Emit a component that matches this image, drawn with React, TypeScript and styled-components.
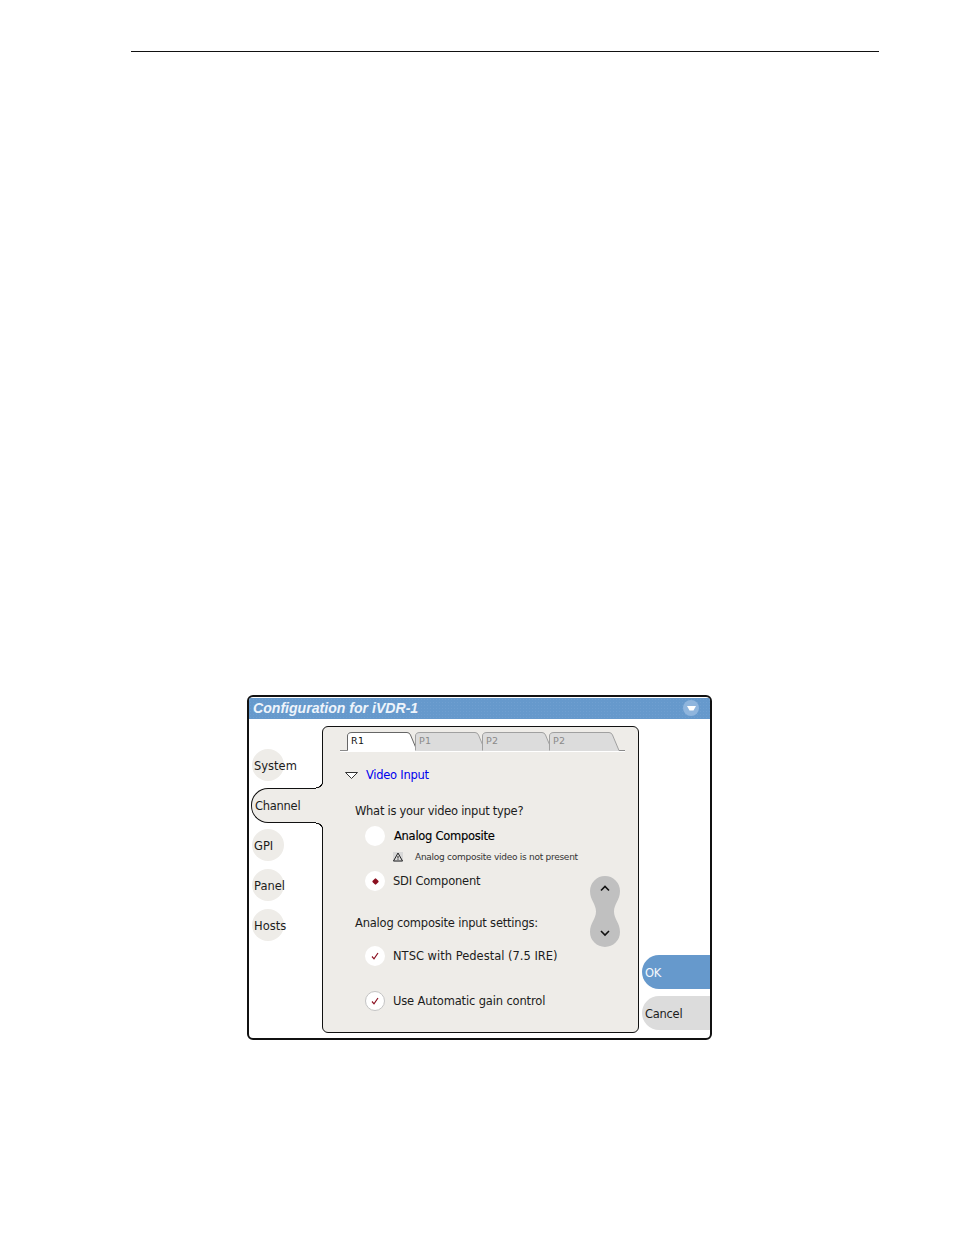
import styled, { createGlobalStyle } from 'styled-components'

const panelColor = '#eeece8'
const blue = '#6699cc'

const GlobalStyle = createGlobalStyle`
  html, body {
    margin: 0;
    padding: 0;
    background: #fff;
  }
  body {
    font-family: 'DejaVu Sans', 'Liberation Sans', sans-serif;
    font-size: 11.5px;
    letter-spacing: -0.27px;
    color: #1c1c1c;
  }
`

const Page = styled.div`
  width: 954px;
  height: 1235px;
  padding-top: 51px;
  box-sizing: border-box;
  overflow: hidden;
`

const TopRule = styled.div`
  width: 748px;
  height: 1px;
  margin-left: 131px;
  background: #111;
`

const Dialog = styled.div`
  width: 465px;
  height: 345px;
  margin: 643px 0 0 247px;
  box-sizing: border-box;
  border: 2px solid #111;
  border-radius: 6px;
  overflow: hidden;
  display: flex;
  flex-direction: column;
`

const TitleBar = styled.div`
  height: 21px;
  margin-top: 1px;
  flex: none;
  display: flex;
  align-items: center;
  justify-content: space-between;
  box-sizing: border-box;
  padding: 0 11px 1px 4px;
  background-color: ${blue};
  background-image: radial-gradient(circle, #6f9fd0 0.6px, transparent 0.8px);
  background-size: 3px 3px;
`

const Title = styled.span`
  font-family: 'Liberation Sans', Arial, sans-serif;
  font-size: 14.1px;
  font-weight: 700;
  font-style: italic;
  letter-spacing: 0;
  color: #eef4fb;
`

const MenuButton = styled.div`
  width: 16px;
  height: 16px;
  border-radius: 50%;
  background: #8fb5dd;
  display: flex;
  align-items: center;
  justify-content: center;
`

const Body = styled.div`
  flex: 1;
  display: flex;
  padding-top: 7px;
  padding-bottom: 5px;
  min-height: 0;
`

const Sidebar = styled.div`
  width: 73px;
  flex: none;
  padding-top: 19px;
  box-sizing: border-box;
  position: relative;
  z-index: 2;
`

const SideRow = styled.div`
  height: 40px;
  display: flex;
  align-items: center;
`

const SideItem = styled.div`
  position: relative;
  display: flex;
  align-items: center;
  height: 32px;
  margin-left: 3px;
  padding: 2px 0 0 2px;
  box-sizing: border-box;
  letter-spacing: 0;

  &::before {
    content: '';
    position: absolute;
    left: 0;
    top: 0;
    width: 32px;
    height: 32px;
    border-radius: 50%;
    background: ${panelColor};
  }

  span {
    position: relative;
  }
`

const SideTabActive = styled.div`
  position: relative;
  width: 72px;
  height: 35px;
  margin-left: 2px;
  margin-right: -1px;
  padding: 1px 0 0 3px;
  box-sizing: border-box;
  display: flex;
  align-items: center;
  background: ${panelColor};
  border: 1px solid #111;
  border-right: none;
  border-radius: 17px 0 0 17px;

  &::before,
  &::after {
    content: '';
    position: absolute;
    right: 0;
    width: 7px;
    height: 8px;
  }

  &::before {
    top: -8px;
    background: radial-gradient(circle at 0 0, #fff 6px, #111 6.3px, #111 7.2px, ${panelColor} 7.5px);
  }

  &::after {
    bottom: -8px;
    background: radial-gradient(circle at 0 100%, #fff 6px, #111 6.3px, #111 7.2px, ${panelColor} 7.5px);
  }
`

const Panel = styled.div`
  position: relative;
  width: 317px;
  flex: none;
  box-sizing: border-box;
  border: 1px solid #111;
  border-radius: 6px;
  background: ${panelColor};
  padding-top: 4px;
`

const TabStrip = styled.div`
  width: 285px;
  height: 20px;
  margin-left: 17px;
  padding-left: 7px;
  box-sizing: border-box;
  display: flex;
  border-bottom: 1px solid #8a8a8a;
  box-shadow: 0 1px 0 #fff;
`

const Tab = styled.div<{ $active?: boolean }>`
  position: relative;
  width: ${p => (p.$active ? 68 : 67)}px;
  height: 20px;
  flex: none;
  padding: 4px 0 0 4px;
  box-sizing: border-box;
  font-size: 9.5px;
  letter-spacing: 0.3px;
  color: ${p => (p.$active ? '#111' : '#8a8a8a')};

  svg {
    position: absolute;
    left: 0;
    top: 0;
  }

  span {
    position: relative;
  }
`

const Line = styled.div<{ $top: number; $left: number; $spacing?: number }>`
  height: 20px;
  margin-top: ${p => p.$top}px;
  margin-left: ${p => p.$left}px;
  display: flex;
  align-items: center;
  white-space: nowrap;
  letter-spacing: ${p => p.$spacing ?? -0.27}px;
`

const DiscloseLabel = styled.span`
  margin-left: 8px;
  color: #0000ee;
`

const StrongLabel = styled.span`
  margin-left: 1px;
  color: #000;
  -webkit-text-stroke: 0.15px #000;
`

const Bullet = styled.div<{ $ring?: boolean }>`
  width: 20px;
  height: 20px;
  flex: none;
  margin-right: 8px;
  border-radius: 50%;
  box-sizing: border-box;
  background: #fff;
  border: ${p => (p.$ring ? '1.5px solid #c4c4c4' : 'none')};
  display: flex;
  align-items: center;
  justify-content: center;
`

const Dot = styled.div`
  width: 5px;
  height: 5px;
  background: #8b1020;
  transform: rotate(45deg);
  border-radius: 1px;
`

const Warning = styled.div`
  width: 10px;
  height: 10px;
  flex: none;
  margin-right: 12px;
  background: #d8d8d8;
  display: flex;
`

const Note = styled.span`
  font-size: 9px;
  letter-spacing: -0.27px;
  color: #333;
`

const Stepper = styled.div`
  position: absolute;
  left: 267px;
  top: 149px;
  width: 30px;
  height: 71px;
`

const ActionColumn = styled.div`
  flex: 1;
  margin-left: 3px;
  padding-bottom: 3px;
  display: flex;
  flex-direction: column;
  justify-content: flex-end;
  gap: 7px;
`

const ActionButton = styled.div<{ $primary?: boolean }>`
  height: 34px;
  padding: 2px 0 0 3px;
  box-sizing: border-box;
  display: flex;
  align-items: center;
  border-radius: 17px 0 0 17px;
  background: ${p => (p.$primary ? blue : '#dcdcdc')};
  color: ${p => (p.$primary ? '#f4f8fc' : '#1c1c1c')};
`

const TabShape = ({ active }: { active?: boolean }) => (
  <svg width="74" height="21" viewBox="0 0 74 21">
    <path
      d="M0.5 20V5Q0.5 1.5 5 1.5H60Q62.5 1.5 63.5 4L70 19.5V20Z"
      fill={active ? '#fff' : '#dcdcdc'}
      stroke="none"
    />
    <path
      d="M0.5 19.5V5Q0.5 1.5 5 1.5H60Q62.5 1.5 63.5 4L70 19.5"
      fill="none"
      stroke={active ? '#666' : '#a0a0a0'}
    />
  </svg>
)

const sideItems = ['GPI', 'Panel', 'Hosts']

const App = () => {
  return (
    <Page>
      <GlobalStyle />
      <TopRule />
      <Dialog>
        <TitleBar>
          <Title>Configuration for iVDR-1</Title>
          <MenuButton>
            <svg width="9" height="5" viewBox="0 0 9 5">
              <path d="M0 0H9L6.5 4.5H2.5Z" fill="#fff" />
            </svg>
          </MenuButton>
        </TitleBar>
        <Body>
          <Sidebar>
            <SideRow>
              <SideItem>
                <span>System</span>
              </SideItem>
            </SideRow>
            <SideRow>
              <SideTabActive>Channel</SideTabActive>
            </SideRow>
            {sideItems.map(item => (
              <SideRow key={item}>
                <SideItem>
                  <span>{item}</span>
                </SideItem>
              </SideRow>
            ))}
          </Sidebar>
          <Panel>
            <TabStrip>
              <Tab $active>
                <TabShape active />
                <span>R1</span>
              </Tab>
              <Tab>
                <TabShape />
                <span>P1</span>
              </Tab>
              <Tab>
                <TabShape />
                <span>P2</span>
              </Tab>
              <Tab>
                <TabShape />
                <span>P2</span>
              </Tab>
            </TabStrip>
            <Line $top={14} $left={22}>
              <svg width="13" height="7" viewBox="0 0 13 7">
                <path d="M0.5 0.5H12.5L6.5 6.5Z" fill="#fff" stroke="#333" />
              </svg>
              <DiscloseLabel>Video Input</DiscloseLabel>
            </Line>
            <Line $top={16} $left={32}>
              What is your video input type?
            </Line>
            <Line $top={5} $left={42}>
              <Bullet />
              <StrongLabel>Analog Composite</StrongLabel>
            </Line>
            <Line $top={1} $left={70}>
              <Warning>
                <svg width="10" height="10" viewBox="0 0 10 10">
                  <path d="M5 1L9.5 9H0.5Z" fill="none" stroke="#222" />
                  <path d="M5 4V6.5M5 7.3V8" stroke="#222" />
                </svg>
              </Warning>
              <Note>Analog composite video is not present</Note>
            </Line>
            <Line $top={4} $left={42} $spacing={-0.2}>
              <Bullet>
                <Dot />
              </Bullet>
              SDI Component
            </Line>
            <Line $top={22} $left={32} $spacing={-0.21}>
              Analog composite input settings:
            </Line>
            <Line $top={13} $left={42} $spacing={0}>
              <Bullet>
                <svg width="8" height="8" viewBox="0 0 8 8">
                  <path d="M1 4.5L3 6.8L7 1" fill="none" stroke="#8b1020" strokeWidth="1.2" />
                </svg>
              </Bullet>
              NTSC with Pedestal (7.5 IRE)
            </Line>
            <Line $top={25} $left={42} $spacing={-0.15}>
              <Bullet $ring>
                <svg width="8" height="8" viewBox="0 0 8 8">
                  <path d="M1 4.5L3 6.8L7 1" fill="none" stroke="#8b1020" strokeWidth="1.2" />
                </svg>
              </Bullet>
              Use Automatic gain control
            </Line>
            <Stepper>
              <svg width="30" height="71" viewBox="0 0 30 71">
                <path
                  d="M15 0A15 15 0 0 1 30 15C30 24 24 28 24 35.5C24 43 30 47 30 56A15 15 0 0 1 0 56C0 47 6 43 6 35.5C6 28 0 24 0 15A15 15 0 0 1 15 0Z"
                  fill="#c0c0c0"
                />
                <path d="M11 14.5L15 10.5L19 14.5" fill="none" stroke="#111" strokeWidth="1.6" />
                <path d="M11 55L15 59L19 55" fill="none" stroke="#111" strokeWidth="1.6" />
              </svg>
            </Stepper>
          </Panel>
          <ActionColumn>
            <ActionButton $primary>OK</ActionButton>
            <ActionButton>Cancel</ActionButton>
          </ActionColumn>
        </Body>
      </Dialog>
    </Page>
  )
}

export default App
